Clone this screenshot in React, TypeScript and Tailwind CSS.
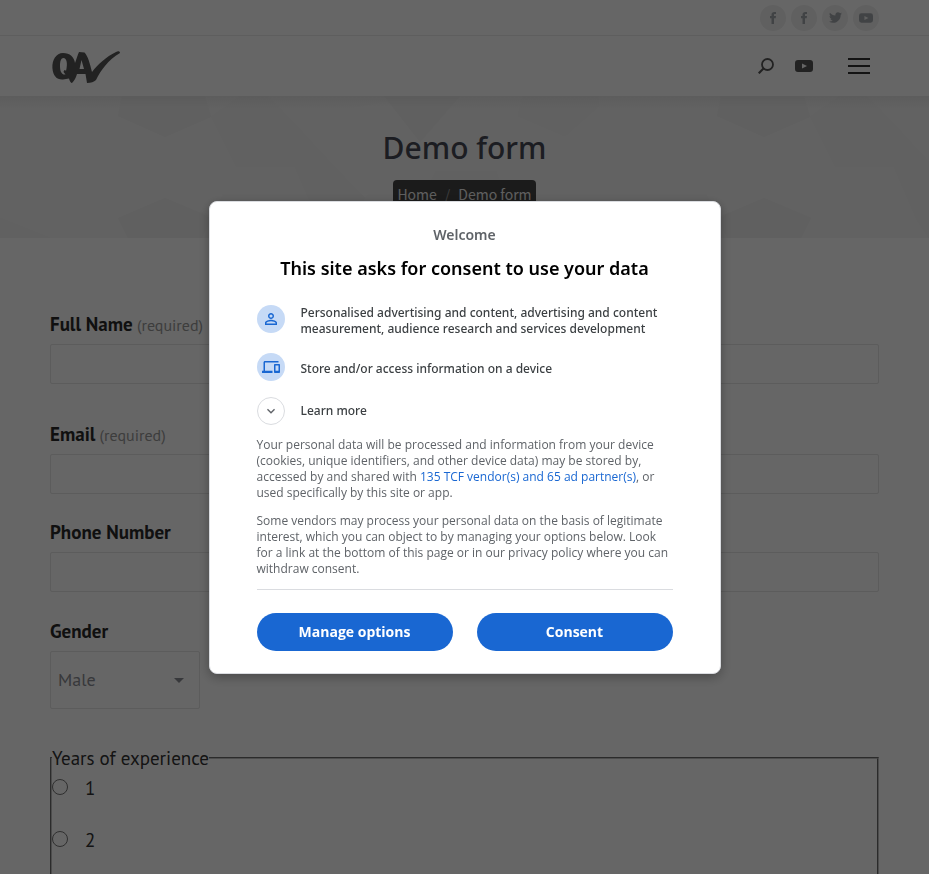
import { useState } from "react";
import type { ReactNode } from "react";
import { FaTwitter } from "react-icons/fa";
import { MdOutlineDevices, MdPersonOutline, MdExpandMore } from "react-icons/md";

const formFont = "font-['PT_Sans','Noto_Sans',sans-serif]";

function Social({ label, children }: { label: string; children: ReactNode }) {
  return (
    <a href="#" aria-label={label} className="flex size-[26px] items-center justify-center rounded-full bg-[#f0f0f0] text-[#a4a8ad]">
      {children}
    </a>
  );
}

function YoutubeGlyph({ className }: { className: string }) {
  return (
    <svg viewBox="0 0 18 12" className={className} fill="currentColor" aria-hidden="true">
      <path fillRule="evenodd" d="M3 0H15Q18 0 18 3V9Q18 12 15 12H3Q0 12 0 9V3Q0 0 3 0ZM7 3.5V8.5L12 6Z" />
    </svg>
  );
}

function FacebookGlyph() {
  return (
    <svg viewBox="0 0 7 12" className="h-3 w-[7px]" fill="currentColor" aria-hidden="true">
      <path d="M1.5 12V6.2H0V4H1.5V2.8C1.5.9 2.5 0 4.2 0H6V2.1H4.8C4.1 2.1 4 2.4 4 3V4H6L5.7 6.2H4V12Z" />
    </svg>
  );
}

function Logo() {
  return (
    <svg viewBox="0 0 70 34" className="h-[34px] w-[70px]" aria-hidden="true">
      <path
        fill="#555"
        fillRule="evenodd"
        d="M11 3C4 3 0 10 .4 18C1 26 5 30 11 29.500L17 28.500C17.500 31 19 33 20 33C22 31 24 28 25 24L33.500 24L35 33C39 33 42 32 44 30C49 20 56 10 68 3C68 1 66 .8 64 2C54 7 46 14 40 22C38 14 36 6 32.500 2.500L27 2C25.500 5 24.500 9 23 13C22 7 18 3 11 3ZM11.500 8C14.500 8 16 13 14 21C13 19 12 20 11.500 22L13.500 24.500C10 25 8 22 8 16C8 11 9 8 11.500 8ZM29.500 10L32 19H27.500Z"
      />
    </svg>
  );
}

function BannerPattern() {
  return (
    <svg className="absolute inset-0 h-full w-full" aria-hidden="true">
      <defs>
        <pattern id="facets" width="599" height="142" patternUnits="userSpaceOnUse">
          <rect width="599" height="142" fill="#f4f4f4" />
          <path fill="#f6f6f6" d="M118 20L165 41L211 21L236 71L216 122L165 102L118 122L95 72Z" />
          <path fill="#f0f0f0" d="M122 0H205L211 21L165 41L118 20Z" />
          <path fill="#f0f0f0" d="M165 102L212 122L202 142H128L118 122Z" />
          <path fill="#f2f2f2" d="M211 21L240 0H268L365 102L345 142H318L295 71H236Z" />
          <path fill="#f4f4f4" d="M236 71H295L318 124L330 142H202L212 122Z" />
          <path fill="#f6f6f6" d="M313 47L338 15L388 5L420 46L365 102Z" />
          <path fill="#f0f0f0" d="M384 0H460L420 46Z" />
          <path fill="#f2f2f2" d="M522 0H599V10L565 40L518 20Z" />
          <path fill="#f2f2f2" d="M436 75H496L520 142H404Z" />
          <path fill="#f2f2f2" d="M0 122L50 142H0Z" />
        </pattern>
      </defs>
      <rect width="100%" height="100%" fill="url(#facets)" />
    </svg>
  );
}

function Field({ id, label, required, type }: { id: string; label: string; required?: boolean; type: string }) {
  return (
    <div className="flex flex-col gap-2">
      <label htmlFor={id} className="text-[19px] leading-6 font-semibold text-[#2a2a2a]">
        {label}
        {required && <span className="text-base leading-none font-normal text-[#999]"> (required)</span>}
      </label>
      <input id={id} type={type} className="h-10 w-full rounded-xs border border-[#e6e6e6] bg-white px-2" />
    </div>
  );
}

function Purpose({ icon, children }: { icon: ReactNode; children: ReactNode }) {
  return (
    <li className="flex min-h-8 items-start gap-4">
      <span className="flex size-7 shrink-0 items-center justify-center rounded-full bg-[#c6daf6] text-[#1967d2]">{icon}</span>
      <span className="self-center">{children}</span>
    </li>
  );
}

export default function App() {
  const [open, setOpen] = useState(true);
  return (
    <div className="h-screen overflow-hidden bg-white">
      <header>
        <div className="flex h-9 items-center justify-end gap-[5px] border-b border-[#ebebeb] px-[50px]">
          <Social label="Facebook page"><FacebookGlyph /></Social>
          <Social label="Facebook group"><FacebookGlyph /></Social>
          <Social label="Twitter"><FaTwitter size={13} /></Social>
          <Social label="YouTube"><YoutubeGlyph className="h-[10px] w-[14px]" /></Social>
        </div>
        <div className="flex h-[60px] items-center justify-between px-[50px]">
          <a href="#" aria-label="QA home" className="pt-[2px] pl-[2px]"><Logo /></a>
          <div className="flex items-center pr-[9px] text-[#555]">
            <button type="button" aria-label="Search">
              <svg viewBox="0 0 16 16" className="size-4" fill="none" stroke="currentColor" strokeWidth="1.8" aria-hidden="true">
                <circle cx="9.500" cy="6.500" r="5.500" />
                <path d="M5.500 10.500L.7 15.300" strokeWidth="2.200" />
              </svg>
            </button>
            <a href="#" aria-label="YouTube channel" className="ml-[21px]"><YoutubeGlyph className="h-3 w-[18px]" /></a>
            <button type="button" aria-label="Menu" className="ml-[35px] flex w-[22px] flex-col gap-[5px]">
              <span className="h-[2px] bg-[#333]" />
              <span className="h-[2px] bg-[#333]" />
              <span className="h-[2px] bg-[#333]" />
            </button>
          </div>
        </div>
      </header>

      <section className="relative flex h-[142px] flex-col items-center overflow-hidden">
        <BannerPattern />
        <div className="absolute inset-x-0 top-0 h-3 bg-linear-to-b from-black/5 to-transparent" />
        <h1 className="relative mt-8 font-['Noto_Sans',sans-serif] text-[30px] leading-10 font-medium text-[#474a55]">Demo form</h1>
        <nav aria-label="Breadcrumb" className="relative mt-3 flex h-7 items-center rounded-sm bg-[#444] px-1 font-['Noto_Sans_CJK_SC','Noto_Sans',sans-serif] text-sm text-[#eee]">
          <a href="#">Home</a>
          <span className="px-2 text-[#999]">/</span>
          <span>Demo form</span>
        </nav>
      </section>

      <main className={`px-[50px] pt-[74px] ${formFont}`}>
        <form>
          <Field id="name" label="Full Name" required type="text" />
          <div className="mt-[38px]"><Field id="email" label="Email" required type="email" /></div>
          <div className="mt-[26px]"><Field id="phone" label="Phone Number" type="tel" /></div>
          <div className="mt-[27px] flex flex-col items-start gap-2">
            <label htmlFor="gender" className="text-[19px] leading-6 font-semibold text-[#2a2a2a]">Gender</label>
            <div className="relative">
              <select id="gender" className="block h-[58px] w-[150px] appearance-none rounded-xs border border-[#e6e6e6] bg-white px-[7px] text-lg text-[#8b8d94]">
                <option>Male</option>
                <option>Female</option>
              </select>
              <span className="pointer-events-none absolute top-[27px] right-4 border-x-5 border-t-5 border-x-transparent border-t-[#8b8d94]" />
            </div>
          </div>
          <fieldset className="mt-[37px] h-[320px] border-2 border-[#c0c0c0] [border-style:groove] text-[19px] text-[#333]">
            <legend className="leading-6">Years of experience</legend>
            {["1", "2"].map((year) => (
              <label key={year} className="flex h-[52px] items-start gap-[17px] leading-9">
                <input type="radio" name="years" value={year} className="mt-[9px] size-4" />
                {year}
              </label>
            ))}
          </fieldset>
        </form>
      </main>

      {open && (
        <div className="fixed inset-0 flex items-center justify-center bg-black/60">
          <div role="dialog" aria-modal="true" aria-labelledby="consent-title" className="w-full max-w-[512px] rounded-lg border border-[#dadce0] bg-white px-[47px] pt-[21px] pb-[22px] font-['Open_Sans','Noto_Sans',sans-serif] shadow-[0_3px_12px_rgba(0,0,0,0.3)]">
            <p className="text-center font-['Noto_Sans',sans-serif] text-sm leading-6 font-semibold text-[#5f6368]">Welcome</p>
            <h2 id="consent-title" className="mt-[9px] text-center font-['Noto_Sans',sans-serif] text-lg leading-6 font-semibold text-black">This site asks for consent to use your data</h2>
            <ul className="mt-[25px] flex flex-col gap-4 font-['Noto_Sans',sans-serif] text-xs leading-4 font-medium text-[#3c4043]">
              <Purpose icon={<MdPersonOutline size={18} />}>Personalised advertising and content, advertising and content measurement, audience research and services development</Purpose>
              <Purpose icon={<MdOutlineDevices size={18} />}>Store and/or access information on a device</Purpose>
            </ul>
            <button type="button" className="mt-3 flex items-center gap-4 font-['Noto_Sans',sans-serif] text-xs leading-4 font-medium text-[#3c4043]">
              <span className="flex size-7 items-center justify-center rounded-full border border-[#dadce0] text-[#5f6368]"><MdExpandMore size={16} /></span>
              Learn more
            </button>
            <div className="mt-3 flex flex-col gap-3 border-b border-[#dadce0] pb-3 text-xs leading-4 text-[#5f6368]">
              <p>Your personal data will be processed and information from your device (cookies, unique identifiers, and other device data) may be stored by, accessed by and shared with <a href="#" className="text-[#1967d2]">135 TCF vendor(s) and 65 ad partner(s)</a>, or used specifically by this site or app.</p>
              <p>Some vendors may process your personal data on the basis of legitimate interest, which you can object to by managing your options below. Look for a link at the bottom of this page or in our privacy policy where you can withdraw consent.</p>
            </div>
            <div className="mt-[23px] grid grid-cols-2 gap-6 text-sm font-bold text-white">
              <button type="button" className="h-[38px] rounded-full bg-[#1967d2]">Manage options</button>
              <button type="button" onClick={() => setOpen(false)} className="h-[38px] rounded-full bg-[#1967d2]">Consent</button>
            </div>
          </div>
        </div>
      )}
    </div>
  );
}
